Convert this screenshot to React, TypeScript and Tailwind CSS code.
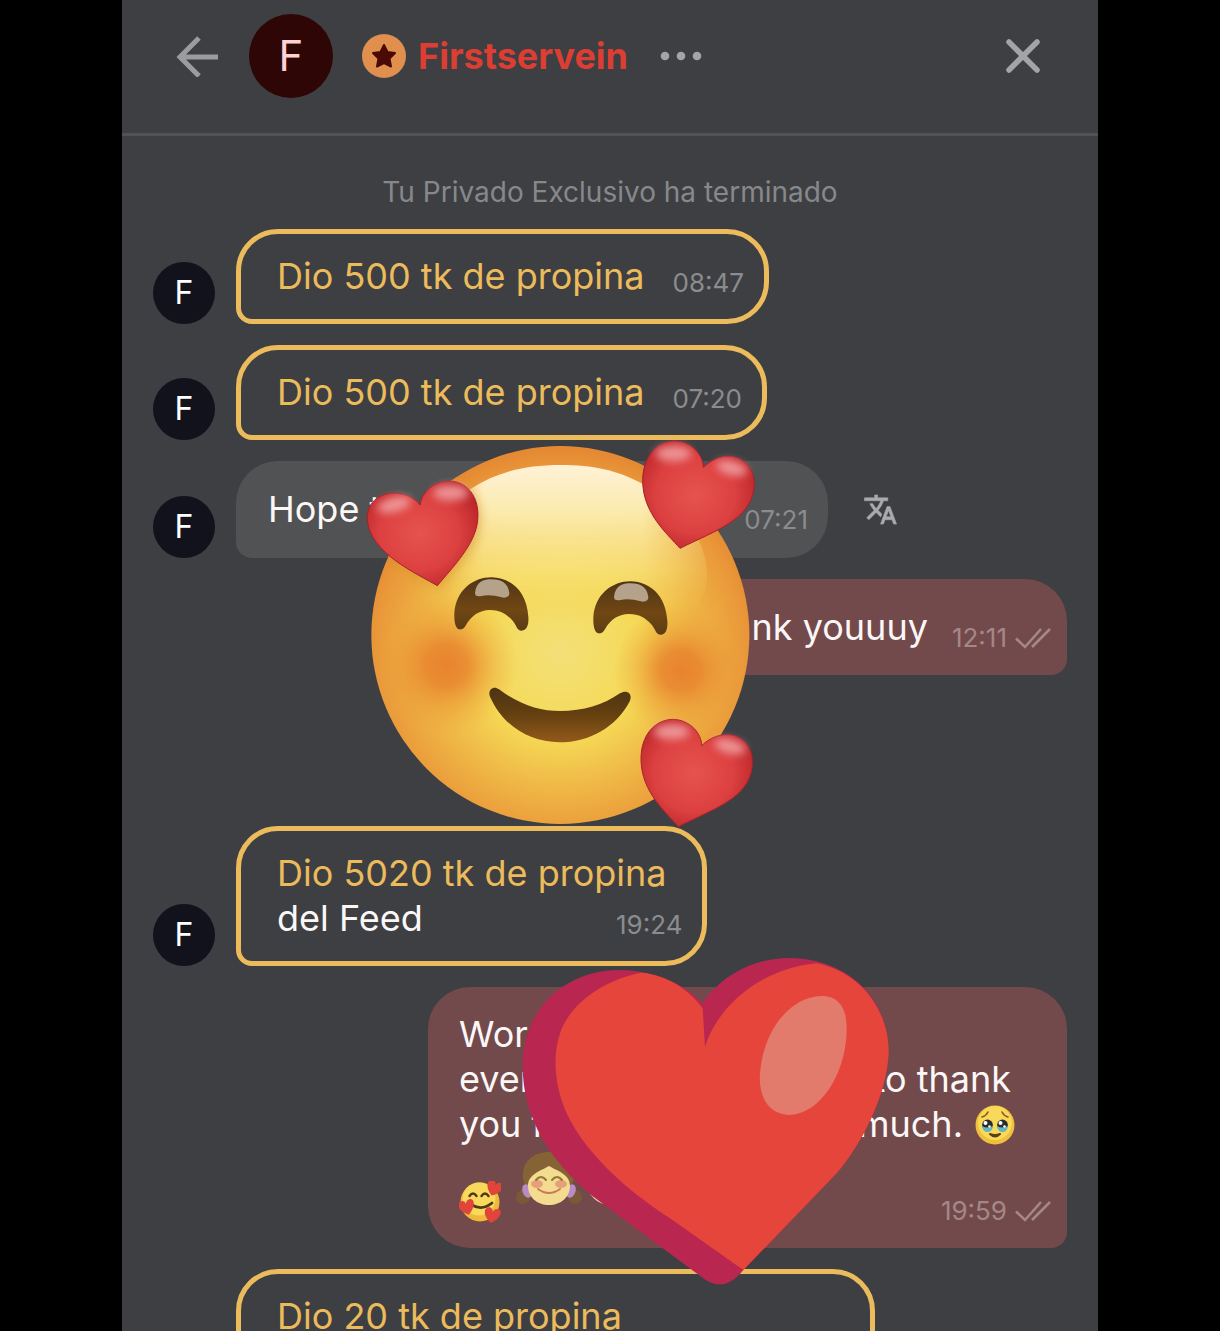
import React from 'react';
import clsx from 'clsx';

const Avatar = () => (
  <div className="size-[62px] shrink-0 rounded-full bg-[#11121c] text-white text-[32px] leading-none flex items-center justify-center">
    F
  </div>
);

const DoubleCheck = () => (
  <svg width="36" height="22" viewBox="0 0 36 22" fill="none" stroke="currentColor" strokeWidth="2.6">
    <path d="M1 11.5 L10 20 L26 2 M17 20 L35 2" />
  </svg>
);

const TranslateIcon = () => (
  <svg width="35" height="35" viewBox="0 0 24 24" fill="currentColor" stroke="currentColor" strokeWidth="0.4">
    <path d="M12.87 15.07l-2.54-2.51.03-.03A17.52 17.52 0 0014.07 6H17V4h-7V2H8v2H1v1.99h11.17C11.5 7.92 10.44 9.75 9 11.35 8.07 10.32 7.3 9.19 6.69 8h-2c.73 1.63 1.73 3.17 2.98 4.56l-5.09 5.02L4 19l5-5 3.11 3.11.76-2.04zM18.5 10h-2L12 22h2l1.12-3h4.75L21 22h2l-4.500-12zm-2.62 7l1.62-4.330L19.120 17h-3.240z" />
  </svg>
);

const Time = ({ value, tip, read }: { value: string; tip?: boolean; read?: boolean }) => (
  <div
    className={clsx(
      'shrink-0 self-end flex items-center gap-2 text-[26px]',
      tip ? 'leading-8' : 'leading-6',
      read ? 'text-[#a58788]' : 'text-[#8b8c8f]'
    )}
  >
    <time>{value}</time>
    {read && <DoubleCheck />}
  </div>
);

const TipMessage = ({ amount, time, note, className }: { amount: number; time: string; note?: string; className?: string }) => (
  <div className={clsx('flex items-end gap-[21px]', className)}>
    <Avatar />
    <div
      className={clsx(
        'flex gap-7 border-[5px] border-[#ebbb5c] rounded-[42px] rounded-bl-[16px] pl-9 py-5',
        note ? 'pr-9' : 'pr-5'
      )}
    >
      <div>
        <p className="text-[#ebbb5c]">Dio {amount} tk de propina</p>
        {note && (
          <div className="flex justify-between -mr-4">
            <p>{note}</p>
            <Time value={time} tip />
          </div>
        )}
      </div>
      {!note && <Time value={time} tip />}
    </div>
  </div>
);

const HEART_RIGHT =
  'M990 355C950 310 880 250 878 155C877 80 920 33 975 33C1025 35 1060 75 1060 112C1085 88 1115 75 1150 80C1195 90 1217 130 1212 175C1200 270 1100 300 990 355Z';
const HEART_LEFT =
  'M262 467C200 430 60 370 52 270C48 210 100 185 140 190C175 192 200 210 210 225C215 190 245 155 295 153C350 152 390 200 383 270C378 340 310 410 262 467Z';

const LeftHeart = () => (
  <>
    <g clipPath="url(#faceClip)">
      <path d={HEART_LEFT} fill="#d08a20" opacity="0.5" filter="url(#shadowBlur)" transform="translate(8 10)" />
    </g>
    <path d={HEART_LEFT} fill="url(#heartBody)" stroke="#a8202a" strokeWidth="3" />
    <g filter="url(#glossBlur)" fill="#f2a3a5" opacity="0.85">
      <ellipse cx="132" cy="224" rx="52" ry="22" transform="rotate(-14 132 224)" />
      <ellipse cx="302" cy="188" rx="54" ry="24" />
    </g>
  </>
);

const RightHeart = () => (
  <>
    <path d={HEART_RIGHT} fill="url(#heartBody)" stroke="#a8202a" strokeWidth="3" />
    <g filter="url(#glossBlur)" fill="#f2a3a5" opacity="0.85">
      <ellipse cx="970" cy="70" rx="54" ry="24" />
      <ellipse cx="1145" cy="114" rx="48" ry="22" transform="rotate(14 1145 114)" />
    </g>
  </>
);

const Eye = () => (
  <>
    <path
      d="M332 598C318 600 312 580 313 550C318 480 370 442 425 442C485 444 530 485 535 560C537 585 530 602 515 602C500 602 500 585 488 572C470 552 450 540 420 540C385 540 365 560 352 578C345 590 342 597 332 598Z"
      fill="url(#eye)"
    />
    <path
      d="M375 488C380 455 400 448 425 448C455 448 475 460 478 490C478 502 465 505 455 502C435 496 410 494 395 498C380 500 375 497 375 488Z"
      fill="#b5a28a"
    />
  </>
);

const LovingFace = ({ className }: { className?: string }) => (
  <svg viewBox="0 0 1260 1230" className={className} aria-hidden="true">
    <defs>
      <clipPath id="faceClip">
        <circle cx="631" cy="615" r="567" />
      </clipPath>
      <filter id="glossBlur" x="-20%" y="-40%" width="140%" height="180%">
        <feGaussianBlur stdDeviation="12" />
      </filter>
      <filter id="shadowBlur" x="-20%" y="-20%" width="140%" height="140%">
        <feGaussianBlur stdDeviation="16" />
      </filter>
      <radialGradient id="face" cx="631" cy="670" r="610" gradientUnits="userSpaceOnUse">
        <stop offset="0" stopColor="#f3e078" />
        <stop offset="0.42" stopColor="#f5d955" />
        <stop offset="0.72" stopColor="#eeb043" />
        <stop offset="0.9" stopColor="#ea993a" />
        <stop offset="1" stopColor="#e58a33" />
      </radialGradient>
      <linearGradient id="shine" x1="0" y1="105" x2="0" y2="560" gradientUnits="userSpaceOnUse">
        <stop offset="0" stopColor="#fff1d6" />
        <stop offset="0.3" stopColor="#fbebaf" />
        <stop offset="0.7" stopColor="#f8e27c" stopOpacity="0.75" />
        <stop offset="1" stopColor="#f4d860" stopOpacity="0" />
      </linearGradient>
      <linearGradient id="sideFade" x1="190" y1="0" x2="1072" y2="0" gradientUnits="userSpaceOnUse">
        <stop offset="0" stopColor="#000" />
        <stop offset="0.24" stopColor="#fff" />
        <stop offset="0.78" stopColor="#fff" />
        <stop offset="1" stopColor="#444" />
      </linearGradient>
      <mask id="shineMask" maskUnits="userSpaceOnUse" x="0" y="0" width="1260" height="1230">
        <rect width="1260" height="1230" fill="url(#sideFade)" />
      </mask>
      <radialGradient id="cheek">
        <stop offset="0" stopColor="#e87f2c" stopOpacity="0.95" />
        <stop offset="0.3" stopColor="#e8822d" stopOpacity="0.82" />
        <stop offset="0.65" stopColor="#ea9234" stopOpacity="0.38" />
        <stop offset="1" stopColor="#eda53c" stopOpacity="0" />
      </radialGradient>
      <linearGradient id="eye" x1="0" y1="0" x2="0" y2="1">
        <stop offset="0" stopColor="#4e3417" />
        <stop offset="0.6" stopColor="#714713" />
        <stop offset="1" stopColor="#5c3c14" />
      </linearGradient>
      <linearGradient id="mouth" x1="0" y1="0" x2="0" y2="1">
        <stop offset="0" stopColor="#4c3414" />
        <stop offset="0.5" stopColor="#65400f" />
        <stop offset="1" stopColor="#935a1b" />
      </linearGradient>
      <radialGradient id="heartBody" cx="0.47" cy="0.5" r="0.6">
        <stop offset="0" stopColor="#e6544e" />
        <stop offset="0.6" stopColor="#dc4040" />
        <stop offset="1" stopColor="#b92428" />
      </radialGradient>
    </defs>
    <circle cx="631" cy="615" r="567" fill="url(#face)" />
    <path
      d="M190 560C190 400 240 250 365 175C440 125 530 105 630 105C730 105 800 120 875 160C1000 230 1070 330 1072 440C1070 500 1040 540 1000 560Z"
      fill="url(#shine)"
      mask="url(#shineMask)"
    />
    <circle cx="290" cy="705" r="215" fill="url(#cheek)" />
    <circle cx="990" cy="720" r="200" fill="url(#cheek)" />
    <Eye />
    <g transform="translate(417 12)">
      <Eye />
    </g>
    <path
      d="M420 800C412 780 430 765 447 778C510 825 570 843 630 843C700 843 760 825 810 790C830 778 848 790 840 812C800 890 720 937 628 937C540 935 460 890 420 800Z"
      fill="url(#mouth)"
    />
    <LeftHeart />
    <RightHeart />
    <g transform="translate(-5 835)">
      <RightHeart />
    </g>
  </svg>
);

const BigHeart = ({ className }: { className?: string }) => (
  <svg viewBox="0 0 1500 1143" className={className} aria-hidden="true">
    <path
      d="M850 985L520 740C390 635 305 500 308 340C312 170 440 60 600 60C720 62 800 110 848 160C900 80 1000 22 1115 24C1290 30 1408 150 1406 310C1400 440 1320 590 1250 670L970 960C930 1010 890 1015 850 985Z"
      fill="#b92750"
    />
    <path
      d="M970 960L750 805C640 735 500 620 440 490C400 400 395 300 430 225C475 140 570 85 665 68C740 75 810 120 848 175L855 292C880 200 990 60 1190 40C1320 65 1408 180 1406 310C1400 440 1320 590 1250 670Z"
      fill="#e6453c"
    />
    <path
      d="M1020 370C1030 240 1110 140 1205 138C1260 138 1280 180 1280 235C1280 370 1200 495 1105 495C1045 492 1015 440 1020 370Z"
      fill="#e27b6c"
    />
  </svg>
);

const HoldingTears = () => (
  <svg width="40" height="40" viewBox="0 0 40 40" className="shrink-0" aria-hidden="true">
    <circle cx="20" cy="20" r="19.5" fill="#f0bf3c" />
    <circle cx="20" cy="18" r="17" fill="#f8d95a" />
    <path d="M7 12Q11 11 13 7M33 12Q29 11 27 7" stroke="#8a5a1c" strokeWidth="1.6" fill="none" strokeLinecap="round" />
    <circle cx="12.5" cy="20" r="5.4" fill="#2c2a2b" />
    <circle cx="27.5" cy="20" r="5.4" fill="#2c2a2b" />
    <path d="M7 21Q12.5 24 18 21Q17 27 12.5 27Q8 27 7 21ZM22 21Q27.5 24 33 21Q32 27 27.5 27Q23 27 22 21Z" fill="#62b5c4" />
    <circle cx="10.5" cy="18" r="2" fill="#fff" />
    <circle cx="14.5" cy="21.5" r="1.3" fill="#fff" />
    <circle cx="25.5" cy="18" r="2" fill="#fff" />
    <circle cx="29.5" cy="21.5" r="1.3" fill="#fff" />
    <path d="M15 29Q20 34 25 29Q20 31 15 29Z" stroke="#5f3d13" strokeWidth="2" fill="#5f3d13" strokeLinejoin="round" />
  </svg>
);

const SMALL_HEART = 'M0 7C-12 -1 -8 -9 -3 -8Q0 -7 0 -4Q1 -8 5 -8C10 -7 9 1 0 7Z';

const SmallLovingFace = () => (
  <svg width="42" height="42" viewBox="0 0 42 42" className="shrink-0" aria-hidden="true">
    <circle cx="21" cy="21" r="19.5" fill="#efb93c" />
    <circle cx="20" cy="18" r="16.5" fill="#f8d95c" />
    <path d="M10.5 15Q14 10 17.5 15M22.5 15Q26 10 29.5 15" stroke="#50371a" strokeWidth="2.4" fill="none" strokeLinecap="round" />
    <path d="M13 24Q23 30 33 22" stroke="#50371a" strokeWidth="2.8" fill="none" strokeLinecap="round" />
    <g fill="#e0443b">
      <path d={SMALL_HEART} transform="translate(35 8) rotate(20)" />
      <path d={SMALL_HEART} transform="translate(8 27) rotate(-15)" />
      <path d={SMALL_HEART} transform="translate(33 35) rotate(10)" />
    </g>
  </svg>
);

const Girl = () => (
  <svg width="66" height="56" viewBox="0 0 66 56" className="shrink-0" aria-hidden="true">
    <circle cx="7" cy="46" r="7" fill="#7a5838" />
    <circle cx="59" cy="46" r="7" fill="#7a5838" />
    <path d="M7 26C6 10 18 1 33 1C48 1 60 10 58 26C58 34 52 40 33 40C14 40 7 36 7 26Z" fill="#856334" />
    <ellipse cx="11" cy="40" rx="4.5" ry="7" fill="#b98bc4" transform="rotate(-20 11 40)" />
    <ellipse cx="55" cy="40" rx="4.5" ry="7" fill="#b98bc4" transform="rotate(20 55 40)" />
    <path d="M33 15C22 21 12 24 12 35C12 46 21 54 33 54C45 54 54 46 54 35C54 24 44 21 33 15Z" fill="#f3db90" />
    <ellipse cx="21" cy="33" rx="6" ry="4" fill="#e5a07a" />
    <ellipse cx="45" cy="33" rx="6" ry="4" fill="#e5a07a" />
    <path d="M20 29Q25 23 30 29M36 29Q41 23 46 29" stroke="#8c7a3c" strokeWidth="2" fill="none" strokeLinecap="round" />
    <path d="M22 38Q33 46 44 38" stroke="#c9795a" strokeWidth="2" fill="none" strokeLinecap="round" />
  </svg>
);

const Baby = () => (
  <svg width="48" height="56" viewBox="0 0 48 56" className="shrink-0" aria-hidden="true">
    <circle cx="24" cy="31" r="23" fill="#f6cfa0" />
    <path d="M13 36Q24 46 35 36" stroke="#c9795a" strokeWidth="2" fill="none" strokeLinecap="round" />
  </svg>
);

const Header = () => (
  <header className="h-[136px] shrink-0 border-b-[3px] border-[#515255] pt-[14px] pl-[54px] pr-[57px]">
    <div className="h-[84px] flex items-center">
      <button aria-label="Volver" className="text-[#9b9c9f]">
        <svg width="42" height="42" viewBox="0 0 42 42" fill="none" stroke="currentColor" strokeWidth="5">
          <path d="M42 22H5M23 3L4 22L23 41" />
        </svg>
      </button>
      <div className="ml-[31px] size-[84px] rounded-full bg-[#2e0606] text-[#fcd3d2] text-[42px] leading-none flex items-center justify-center">
        F
      </div>
      <svg width="44" height="44" viewBox="0 0 44 44" className="ml-[29px]" aria-hidden="true">
        <circle cx="22" cy="22" r="22" fill="#e18f4e" />
        <path
          d="M22 11L25.5 18L33 19L27.5 24.5L29 32.5L22 29L15 32.5L16.5 24.5L11 19L18.5 18Z"
          fill="#4a0a06"
          stroke="#4a0a06"
          strokeWidth="2"
          strokeLinejoin="round"
        />
      </svg>
      <h1 className="ml-3 text-[36px] leading-[44px] font-bold text-[#dc3e33]">Firstservein</h1>
      <button aria-label="Más opciones" className="ml-8 text-[#a3a4a6]">
        <svg width="42" height="10" viewBox="0 0 42 10" fill="currentColor">
          <circle cx="5" cy="5" r="4.3" />
          <circle cx="21" cy="5" r="4.3" />
          <circle cx="37" cy="5" r="4.3" />
        </svg>
      </button>
      <button aria-label="Cerrar" className="ml-auto text-[#a3a4a6]">
        <svg width="36" height="36" viewBox="0 0 36 36" fill="none" stroke="currentColor" strokeWidth="5.5" strokeLinecap="round">
          <path d="M4 4L32 32M32 4L4 32" />
        </svg>
      </button>
    </div>
  </header>
);

const App = () => {
  return (
    <div className="h-screen bg-black overflow-hidden">
      <div className="w-4/5 h-full mx-auto flex flex-col bg-[#3e3f42] text-[#fbf7f7] font-['Inter',sans-serif]">
        <Header />
        <main className="relative flex-1 min-h-0 overflow-hidden px-[31px] pt-9">
          <div className="flex flex-col gap-[21px] text-[36px] leading-[45px]">
            <p className="text-center text-[28px] leading-10 text-[#87888b] -mb-1">Tu Privado Exclusivo ha terminado</p>

            <TipMessage amount={500} time="08:47" />
            <TipMessage amount={500} time="07:20" />

            <div className="flex items-end gap-[21px]">
              <Avatar />
              <div className="w-[592px] flex justify-between bg-[#505253] rounded-[42px] rounded-bl-[16px] pl-8 pr-5 py-[26px]">
                <p>Hope t</p>
                <Time value="07:21" />
              </div>
              <button aria-label="Traducir" className="ml-[14px] self-center text-[#a9aaac]">
                <TranslateIcon />
              </button>
            </div>

            <div className="self-end w-[440px] flex justify-end gap-6 bg-[#734a4b] rounded-[42px] rounded-br-[16px] pr-4 pt-[26px] pb-[25px]">
              <p>ank youuuy</p>
              <Time value="12:11" read />
            </div>

            <TipMessage amount={5020} time="19:24" note="del Feed" className="mt-[130px]" />

            <div className="self-end w-[639px] bg-[#734a4b] rounded-[42px] rounded-br-[16px] pl-[31px] pr-4 py-[25px]">
              <p>Wor</p>
              <p className="flex justify-between pr-10">
                <span>ever</span>
                <span>to thank</span>
              </p>
              <p className="flex justify-between pr-9">
                <span>you f</span>
                <span className="flex items-center gap-3">
                  much. <HoldingTears />
                </span>
              </p>
              <div className="h-[76px] flex">
                <div className="flex-1 flex items-end gap-[15px]">
                  <SmallLovingFace />
                  <div className="self-start flex gap-1 pt-1">
                    <Girl />
                    <Baby />
                  </div>
                </div>
                <Time value="19:59" read />
              </div>
            </div>

            <div className="flex items-end gap-[21px]">
              <Avatar />
              <div className="w-[639px] h-[140px] border-[5px] border-[#ebbb5c] rounded-[42px] rounded-bl-[16px] pl-9 py-5">
                <p className="text-[#ebbb5c]">Dio 20 tk de propina</p>
              </div>
            </div>
          </div>

          <LovingFace className="absolute left-[228px] top-[294px] w-[420px]" />
          <BigHeart className="absolute left-[298px] top-[814px] w-[500px]" />
        </main>
      </div>
    </div>
  );
};

export default App;
